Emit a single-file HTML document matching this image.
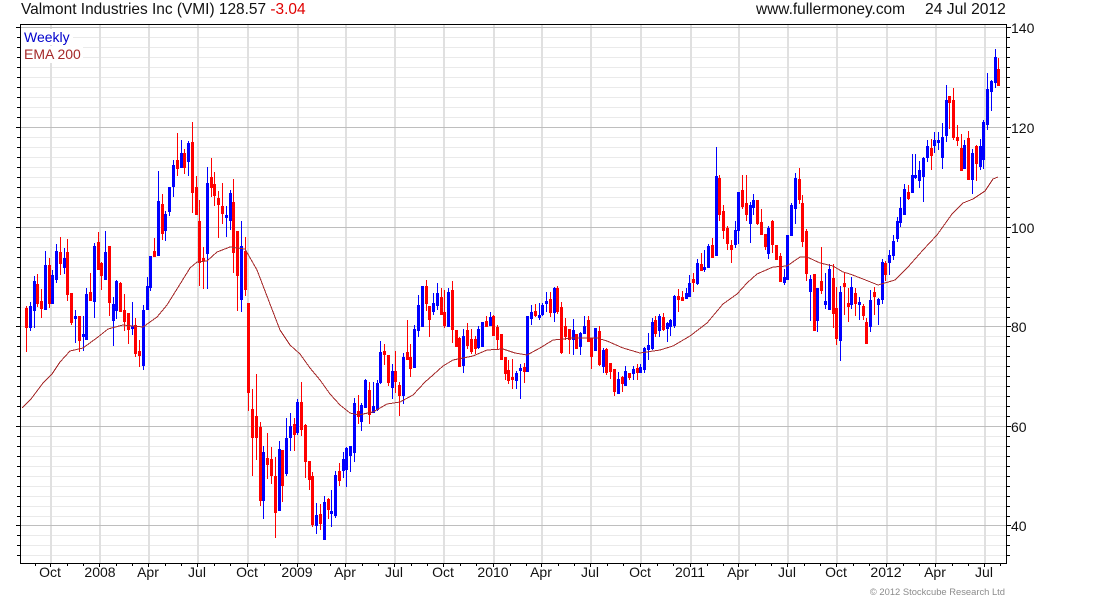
<!DOCTYPE html>
<html><head><meta charset="utf-8"><title>Valmont Industries Inc (VMI)</title>
<style>
html,body{margin:0;padding:0;background:#fff;width:1100px;height:600px;overflow:hidden}
body{position:relative;font-family:"Liberation Sans",Arial,sans-serif;color:#000}
svg{position:absolute;left:0;top:0}
.t{position:absolute;white-space:nowrap}
.h{font-size:15.45px;line-height:18px;top:1px;color:#111}
.y{font-size:14px;line-height:16px;left:1011px;color:#111}
.x{font-size:14px;line-height:16px;top:564px;width:60px;text-align:center;color:#111}
.l{font-size:14px;line-height:16px;left:21px;padding:0 3px;background:#fff}
</style></head><body>
<svg id="c" width="1100" height="600" viewBox="0 0 1100 600" shape-rendering="crispEdges"></svg>
<div class="t l" style="top:29px;color:#0000cc;height:16px;width:46px">Weekly</div>
<div class="t l" style="top:46px;color:#a52a2a;height:17px;width:56px">EMA 200</div>
<div class="t h" style="left:21px">Valmont Industries Inc (VMI) 128.57 <span style="color:#e00000">-3.04</span></div>
<div class="t h" style="left:756px">www.fullermoney.com</div>
<div class="t h" style="left:925px;font-size:15.65px">24 Jul 2012</div>
<div class="t y" style="top:20px">140</div>
<div class="t y" style="top:120px">120</div>
<div class="t y" style="top:220px">100</div>
<div class="t y" style="top:319px">80</div>
<div class="t y" style="top:419px">60</div>
<div class="t y" style="top:518px">40</div>
<div class="t x" style="left:20px">Oct</div><div class="t x" style="left:70px">2008</div><div class="t x" style="left:118px">Apr</div><div class="t x" style="left:167px">Jul</div><div class="t x" style="left:217px">Oct</div><div class="t x" style="left:267px">2009</div><div class="t x" style="left:315px">Apr</div><div class="t x" style="left:364px">Jul</div><div class="t x" style="left:413px">Oct</div><div class="t x" style="left:463px">2010</div><div class="t x" style="left:511px">Apr</div><div class="t x" style="left:560px">Jul</div><div class="t x" style="left:610px">Oct</div><div class="t x" style="left:660px">2011</div><div class="t x" style="left:708px">Apr</div><div class="t x" style="left:757px">Jul</div><div class="t x" style="left:806px">Oct</div><div class="t x" style="left:856px">2012</div><div class="t x" style="left:905px">Apr</div><div class="t x" style="left:954px">Jul</div>
<div class="t" style="font-size:9.4px;line-height:12px;top:586px;right:95px;color:#8c8c8c">&copy; 2012 Stockcube Research Ltd</div>
<script>
var D="r306 352 308 327,b302 331 306 327,b276 328 281 310,r274 307 284 303,r289 318 301 308,b251 309 265 309,r258 308 265 303,b270 303 275 303,b244 283 251 279,r237 275 252 263,b248 274 258 267,r239 301 252 294,r293 325 293 322,b310 343 316 318,r316 352 316 340,b316 351 334 336,b288 339 294 339,r273 300 292 300,b243 318 246 301,r232 269 242 269,r262 290 263 275,b231 280 252 279,r246 316 246 302,b297 346 304 320,b280 319 281 310,r282 312 283 311,r294 331 310 321,r313 344 313 329,b302 335 326 328,r318 357 325 353,r340 367 351 355,b305 370 310 365,b277 310 286 309,b256 291 256 287,r238 256 251 256,b171 255 201 255,r194 240 204 233,b211 241 214 230,b187 216 187 211,b160 197 165 186,r133 176 160 168,b140 167 153 167,r149 174 153 167,b141 176 143 161,r122 213 142 192,r176 214 187 214,r200 286 221 262,r247 289 258 260,b167 289 183 253,r158 197 177 187,r172 206 184 195,r191 238 198 204,r183 224 206 213,b206 237 215 217,b190 230 193 220,r179 273 202 252,r231 311 231 275,b221 312 246 299,r237 296 251 289,r303 411 303 392,r389 476 409 437,r374 460 416 437,r422 506 427 500,b446 519 452 500,r433 479 458 464,r447 484 459 475,r457 538 476 512,b441 510 449 510,r450 502 450 485,b418 476 438 473,b413 451 426 437,r418 451 424 434,b399 435 402 432,r382 436 402 429,r424 478 425 461,r461 490 461 479,r472 527 476 524,b503 534 515 525,r504 530 514 523,b496 539 502 539,r498 519 499 509,b490 527 511 513,b471 518 475 515,r463 486 471 480,b452 478 459 470,b447 487 448 469,b446 472 446 455,b398 462 403 452,r395 424 411 416,b403 431 405 421,b379 407 380 407,r382 424 390 414,b382 412 406 412,b380 411 383 409,b341 384 352 382,r344 365 351 354,r355 386 355 382,b364 399 371 387,r351 393 371 381,r382 416 385 395,b353 404 357 395,r320 359 352 359,r344 377 357 368,b325 368 329 367,b295 337 305 330,b286 326 286 326,r280 311 286 303,r306 337 306 319,b293 315 303 311,b283 310 293 305,r288 314 297 314,r290 328 312 325,b288 326 292 326,r281 343 290 329,r330 347 330 346,r337 366 338 366,b329 373 336 365,r323 349 330 345,r329 354 339 351,r336 354 339 348,b326 349 329 347,b322 346 322 346,r316 326 321 326,b312 325 317 325,r315 335 316 335,r325 349 327 339,r334 360 334 359,r357 380 357 373,r360 384 370 380,r359 389 377 379,b371 389 373 380,b364 399 368 370,r363 383 367 371,b316 371 316 371,b305 325 312 318,r304 317 311 315,b303 320 315 317,b303 316 305 314,b292 312 301 303,r292 317 299 312,b287 322 288 312,r286 314 288 311,r302 354 307 352,r318 340 326 336,r329 354 329 339,b319 355 330 339,r334 348 334 348,b332 355 333 346,b316 333 326 333,r316 341 320 341,r338 369 338 356,b328 350 328 350,r326 366 331 364,b348 373 350 366,r348 375 349 372,r363 379 363 371,r369 396 369 391,b372 394 379 393,r376 392 377 383,b366 385 371 385,r373 380 373 377,b366 380 369 373,r364 380 368 372,b364 372 367 372,b347 373 348 369,b333 360 345 349,b318 350 322 348,r316 337 320 333,b314 337 316 330,r313 331 317 329,b322 342 323 328,b319 336 320 326,b295 328 296 325,r289 312 296 299,r291 301 297 300,b288 299 293 298,b275 296 283 296,r273 292 279 282,b259 285 263 283,r253 270 264 270,b250 272 267 269,b244 267 246 267,r238 257 245 257,b147 255 176 255,r175 221 178 214,r205 239 211 230,r226 250 228 243,r240 263 245 249,b221 248 230 244,b192 244 192 230,r175 209 190 206,r175 221 203 214,b202 243 205 223,b194 215 200 207,r200 225 200 223,r209 234 222 234,r234 250 234 246,b226 259 228 253,r220 253 221 244,r245 259 245 259,r253 281 256 281,b269 285 277 282,b235 279 235 279,b203 236 205 235,b173 224 178 208,r168 204 179 199,r195 247 203 241,r229 281 231 273,b275 321 279 291,r274 330 274 330,b288 332 288 320,r247 294 281 290,b273 309 301 304,b264 310 269 309,r264 328 278 313,r287 345 308 338,b286 361 292 340,r273 315 283 286,r288 322 303 306,b277 309 287 304,r288 316 293 303,b297 320 302 304,r304 320 306 315,r318 343 322 343,b290 332 300 326,r287 315 292 296,b298 325 299 304,b259 304 262 299,r261 281 263 274,b250 275 255 262,b235 260 241 255,b217 242 221 238,b197 227 208 222,b184 214 189 214,r185 200 192 198,b154 192 175 192,b154 179 175 177,b161 188 170 180,b157 202 158 176,b140 162 146 157,r139 170 148 155,b132 153 140 145,b132 150 140 142,b123 169 137 157,b85 142 100 135,r96 129 96 102,r88 140 100 137,r125 146 137 140,r134 171 148 170,b140 169 145 168,r131 179 138 179,b149 194 153 179,r145 181 146 163,b139 170 146 166,b120 169 122 159,b73 130 89 124,b80 111 81 91,b49 88 57 82,r58 86 69 85";
var E="22,408 31,399 43,383 52,374 60,362 70,351 83,348 98,337 108,329 123,325 143,327 157,317 167,305 177,289 190,268 197,262 207,261 217,252 230,247 245,249 257,270 270,304 280,330 290,345 300,354 310,368 320,380 330,394 340,405 350,413 358,415 373,412 387,404 400,402 413,395 425,382 433,375 443,366 453,360 473,356 487,350 503,349 515,353 527,355 540,348 553,340 573,338 597,338 607,341 623,348 640,353 660,350 673,346 690,336 707,323 723,304 737,294 747,283 757,274 773,267 787,266 800,257 807,257 820,263 833,266 843,272 850,274 863,279 878,285 895,280 908,267 923,250 937,235 952,214 963,203 973,199 985,191 993,179 998,177";
var s="",i,y;
var H=[27,37,47,57,67,77,87,97,107,117,137,147,157,167,177,187,197,207,217,237,247,257,267,277,287,297,307,317,336,346,356,366,376,386,396,406,416,436,446,456,466,476,486,496,506,516,535,545,555];
var M=[27,127,227,326,426,525];
var V=[50,99,148,197,247,297,345,394,443,493,541,590,640,690,738,787,836,886,935,984];
function r(x,y,w,h,f){return '<rect x="'+x+'" y="'+y+'" width="'+w+'" height="'+h+'" fill="'+f+'"/>';}
for(i=0;i<H.length;i++){s+=r(21,H[i],985,1,"#eaeaea");s+=r(17,H[i],3,1,"#000");s+=r(1007,H[i],3,1,"#000");}
for(i=0;i<V.length;i++){s+=r(V[i],25,2,538,"#e0e0e0");s+=r(V[i],564,1,3,"#000");}
for(i=0;i<M.length;i++){s+=r(21,M[i],985,1,"#bebebe");s+=r(16,M[i],4,1,"#000");s+=r(1007,M[i],4,1,"#000");}
s+=r(35,564,1,2,"#000");
for(i=0;i<V.length-1;i++){s+=r(V[i]+17,564,1,2,"#000");s+=r(V[i]+33,564,1,2,"#000");}
s+=r(1000,564,1,2,"#000");
s+=r(20,24,987,1,"#000")+r(20,563,987,1,"#000")+r(20,24,1,540,"#000")+r(1006,24,1,540,"#000");
var a=D.split(",");
for(i=0;i<a.length;i++){
 var c=a[i].charAt(0)=="r"?"#ff0000":"#0000ff",p=a[i].slice(1).split(" ").map(Number),x=Math.round(26+3.769*i);
 s+=r(x,p[0],1,p[1]-p[0],c);
 s+=r(x-1,p[2],3,p[3]-p[2]+1,c);
}
s+='<polyline points="'+E+'" fill="none" stroke="#a52a2a" stroke-width="1"/>';
document.getElementById("c").innerHTML=s;
</script>
</body></html>
